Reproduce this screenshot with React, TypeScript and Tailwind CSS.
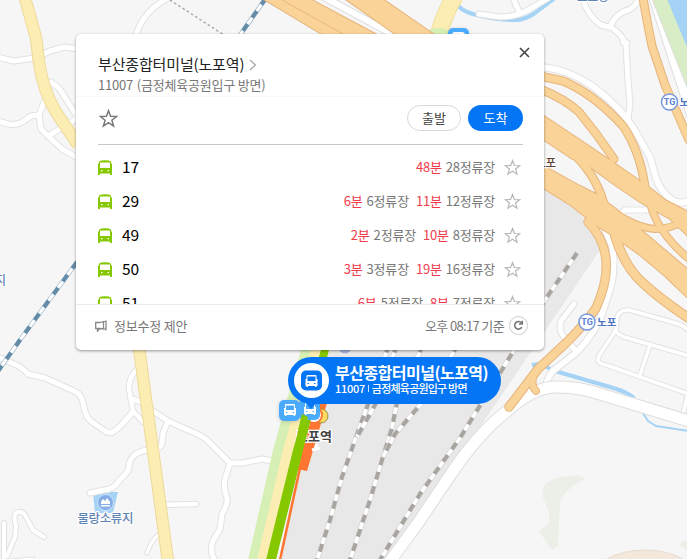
import React, { useState } from "react"

const FONT = "font-['Noto_Sans_CJK_KR','Noto_Sans',sans-serif]"

type Arrival = { min: number; stops: number }

const ROUTES: { name: string; arrivals: Arrival[] }[] = [
  { name: "17", arrivals: [{ min: 48, stops: 28 }] },
  { name: "29", arrivals: [{ min: 6, stops: 6 }, { min: 11, stops: 12 }] },
  { name: "49", arrivals: [{ min: 2, stops: 2 }, { min: 10, stops: 8 }] },
  { name: "50", arrivals: [{ min: 3, stops: 3 }, { min: 19, stops: 16 }] },
  { name: "51", arrivals: [{ min: 6, stops: 5 }, { min: 8, stops: 7 }] },
]

// === MAP DATA ===
const LOCAL_ROADS: { d: string; w: number }[] = [
  { d: "M-2 57L5 59L14 61L35 58L50 51L65 47L78 49", w: 5 },
  { d: "M-2 121L8 124Q17 126 24 121L31 116L39 115L45 100", w: 5 },
  { d: "M39 115L41 129L48 136L62 149L78 158", w: 5 },
  { d: "M48 136L78 118M51 82L59 88L78 118", w: 5 },
  { d: "M136 36Q142 12 168 -2", w: 5 },
  { d: "M-2 357L14 364Q22 367 28 374L45 378L65 387L76 392Q82 395 84 407Q86 418 92 422L105 431Q111 435 117 429Q127 420 133 411", w: 5 },
  { d: "M136 370Q128 380 129 389L133 411L143 422", w: 4.5 },
  { d: "M131 399L139 401L150 409L168 421L190 431Q204 436 211 444L230 463L243 463L262 459L272 461", w: 5 },
  { d: "M168 421L163 433L162 444Q160 450 147 450Q134 452 130 461L128 471L119 481Q113 490 104 490L90 493", w: 5 },
  { d: "M160 505L196 504", w: 4.5 },
  { d: "M158 535Q151 541 147 553", w: 3 },
  { d: "M230 463L225 479Q223 487 227 498Q228 504 222 514L220 529L213 541Q209 551 215 561", w: 5 },
  { d: "M4 523L4 561M7 556L15 537L16 526Q12 512 19 512Q24 511 27 519L33 530L44 537", w: 4 },
  { d: "M12 561L33 559", w: 3 },
  { d: "M479 14L500 17Q517 17 530 9L548 -2M513 -2L520 14", w: 5 },
  { d: "M582 -2Q588 16 601 25L612 28Q624 36 626 46L628 80L630 104L628 118", w: 5 },
  { d: "M610 27Q614 16 625 11Q635 9 639 -2M623 42L627 43", w: 5 },
  { d: "M540 67Q569 69 595 88Q620 107 634 129L650 157L656 178Q660 191 671 199Q678 205 689 201", w: 6 },
  { d: "M617 216L625 210L660 210", w: 5 },
  { d: "M606 232L612 245Q615 263 612 282L604 308Q598 330 577 352L558 367Q548 373 546 386", w: 6 },
  { d: "M574 304L561 321Q558 330 564 337L577 352", w: 5 },
  { d: "M689 331Q684 325 672 322L629 310Q620 309 617 317L616 330L600 354Q594 363 606 365L689 394", w: 3.5 },
  { d: "M615 330Q618 336 631 339L689 356M650 345L640 375M688 394L682 418", w: 3.5 },
]

const MAIN_ROAD = "M388 564L416 526L447 480Q478 433 506 412Q532 388 554 387Q577 386 600 394L689 421"

const RAILS = [
  "M389 345L367 407L355 440L342 477L330 520L317 560",
  "M397 345L375 405L357 437",
  "M423 345L397 402L392 428L382 460L370 500L350 560",
  "M458 345L420 405L395 434L383 457",
  "M577 253L545 300L516 347L460 438L420 494L380 560",
]

const BLUE_RAIL = "M266 -2L240 35M77 262L20 340L-2 371"
const YELLOW_ROAD = "M25 -2L36 38L39 62Q43 91 56 112L78 145M139 348L147 407L157 480L168 562"

const RAMPS: { d: string; w: number }[] = [
  { d: "M540 76L563 81Q594 94 623 126Q640 151 645 187", w: 7 },
  { d: "M540 89Q565 99 579 112L597 135L614 159", w: 7 },
  { d: "M575 155Q598 178 605 208", w: 7 },
  { d: "M588 222Q604 238 606 260Q608 282 596 308Q585 324 568 341L538 369L509 407", w: 7.5 },
  { d: "M534 374Q530 385 536 391", w: 6 },
  { d: "M615 236Q625 268 644 284Q660 299 690 319", w: 8 },
  { d: "M643 -2Q647 22 652 46L665 85L689 140", w: 7 },
  { d: "M625 219Q641 228 655 229Q672 229 689 218", w: 6 },
  { d: "M650 203Q657 232 689 259", w: 6 },
]

const BANDS = [
  "M262 -2L325 36H379L308 -2Z",
  "M344 -2L398 36H436L381 -2Z",
  "M535 110L580 140L617 165L650 188L665 200L692 214V240L670 219L640 202L615 185L586 164L571 158L535 134Z",
  "M535 161L580 186L596 194L608 203L625 216L640 229L660 246L692 273V302L665 276L640 255L620 241L610 234L594 224L572 206L535 183Z",
]

const StarIcon = ({ size, color, w }: { size: number; color: string; w: number }) => (
  <svg width={size} height={size} viewBox="0 0 18 18" fill="none" stroke={color} strokeWidth={w}>
    <path d="M9 1.600L11 6.900L16.700 7.100L12.200 10.600L13.800 16.100L9 12.900L4.200 16.100L5.800 10.600L1.300 7.100L7 6.900Z" />
  </svg>
)

const BusIcon = () => (
  <svg width="14" height="15" viewBox="0 0 14 15">
    <path fill="#86c800" fillRule="evenodd" d="M1 2Q1.500 1 3.500 .6Q7 0 10.500 .6Q12.500 1 13 2V3.500H14V15H12V13.500H2V15H0V3.500H1ZM2 2.500V8H12V2.500ZM3 10V11.200H4.500V10ZM9.500 10V11.200H11V10Z" />
  </svg>
)

// white front view of a bus, drawn around 0,0
const BusGlyph = ({ x, y }: { x: number; y: number }) => (
  <g transform={`translate(${x} ${y})`}>
    <path fill="#fff" fillRule="evenodd" d="M-5 -5Q-5 -6 -4 -6H4Q5 -6 5 -5V-2H6V5H5V6H3.500V5H-3.500V6H-5V5H-6V-2H-5ZM-4 -4.500V0H4V-4.500ZM-4 2V3H-2.500V2ZM2.500 2V3H4V2Z" />
  </g>
)

const TollGate = ({ x, y }: { x: number; y: number }) => (
  <g transform={`translate(${x} ${y})`}>
    <circle r="8" fill="#fff" stroke="#7997e0" strokeWidth="1.5" />
    <text x="0" y="3.2" textAnchor="middle" fontSize="9" fontWeight="700" fill="#5c7fd8" className="font-['Roboto',sans-serif]">TG</text>
    <text x="10" y="4" fontSize="10.5" fontWeight="700" fill="#4f74c0" stroke="#fff" strokeWidth="2" paintOrder="stroke">노포</text>
  </g>
)

const MapCanvas = () => (
  <svg width="687" height="559" viewBox="0 0 687 559" className={`absolute inset-0 ${FONT}`} fill="none" strokeLinejoin="round">
    <rect width="687" height="559" fill="#f6f6f6" />

    {/* green areas and water */}
    <path fill="#ecefe8" d="M585 479L578 475L560 477Q549 480 545 485Q542 490 543 497L549 513V523L539 531L552 550L558 546L560 503Q565 488 585 479ZM687 541Q680 541 680 546L687 550Z" />
    <ellipse cx="645" cy="576" rx="50" ry="26" fill="#f4e8dd" stroke="#e8dcd0" />
    <path fill="#a5d3f5" d="M666 -1H688V50ZM93 492H118L113 513H95Z" />
    <path fill="#d8edc5" d="M651 -1H667L688 50V91Z" />
    <path fill="#fff" stroke="#ddd" d="M649 -1H652L688 90V120Z" />
    <path stroke="#a5d3f5" strokeWidth="4" d="M458 6Q465 13 481 16Q500 20 515 20Q525 20 535 13L555 -2M532 365L540 364L555 371L610 387Q628 392 634 398" />
    <path stroke="#a5d3f5" strokeWidth="2" d="M643 413L648 421L656 426L689 431" />

    {/* rail yard */}
    <path fill="#e8e8e8" d="M322 340L535 180L544 188L572 205L590 226L600 250L480 427L385 562L279 562Z" />

    {/* local roads */}
    <g strokeLinecap="round">
      {LOCAL_ROADS.map((r) => <path key={r.d} d={r.d} stroke="#e2e2e2" strokeWidth={r.w + 2} />)}
      {LOCAL_ROADS.map((r) => <path key={r.d} d={r.d} stroke="#fff" strokeWidth={r.w} />)}
      <path d={MAIN_ROAD} stroke="#dedede" strokeWidth="13" />
      <path d={MAIN_ROAD} stroke="#fff" strokeWidth="11" />
    </g>
    <path d="M322 -4L396 36" stroke="#ddd" strokeWidth="8" />
    <path d="M322 -4L396 36" stroke="#fff" strokeWidth="6" />
    <path d="M170 0L224 35" stroke="#aaa" strokeWidth="1.5" strokeDasharray="2.5 2.5" />

    {/* railways */}
    {RAILS.map((d) => (
      <g key={d}>
        <path d={d} stroke="#d6d6d6" strokeWidth="5" />
        <path d={d} stroke="#fff" strokeWidth="3.6" />
        <path d={d} stroke="#a8a49f" strokeWidth="4" strokeDasharray="8 7" />
      </g>
    ))}
    <path d={BLUE_RAIL} stroke="#9eb9cc" strokeWidth="4.6" />
    <path d={BLUE_RAIL} stroke="#fff" strokeWidth="3" />
    <path d={BLUE_RAIL} stroke="#648ca9" strokeWidth="4" strokeDasharray="8 8" />

    {/* yellow roads */}
    <path d={YELLOW_ROAD} stroke="#eed99a" strokeWidth="12.5" />
    <path d={YELLOW_ROAD} stroke="#fcedb3" strokeWidth="10.5" />
    <path d="M455 -4Q445 12 438 36" stroke="#eed99a" strokeWidth="17.5" />
    <path d="M455 -4Q445 12 438 36" stroke="#fcedb3" strokeWidth="16" />
    <path d="M425 36Q428 28 438 28Q449 28 452 36Z" fill="#d6efb5" />

    {/* expressways */}
    {RAMPS.map((r) => <path key={r.d} d={r.d} stroke="#e6b57c" strokeWidth={r.w + 2} strokeLinecap="round" />)}
    {BANDS.map((d) => <path key={d} d={d} stroke="#e6b57c" strokeWidth="2" />)}
    {BANDS.map((d) => <path key={d} d={d} fill="#f9d398" />)}
    {RAMPS.map((r) => <path key={r.d} d={r.d} stroke="#f9d398" strokeWidth={r.w} strokeLinecap="round" />)}
    <path d="M282 0L345 35" stroke="#eab77d" />

    {/* bus lane corridor */}
    <path fill="#d6efb5" d="M302 346H313L286 450L257 560H248L273 450Z" />
    <path fill="#fcedb3" d="M312 346H323L294 450L267 560H257L283 450Z" />
    <path stroke="#ff7531" strokeWidth="2.5" d="M300 468L280 560" />
    <path fill="#ff7531" d="M316 403H327L307 471L297 469Z" />
    <circle cx="321" cy="416" r="7" fill="#fbdc63" stroke="#a58c3c" />
    <circle cx="314" cy="415" r="8" fill="#fff" stroke="#ff7531" strokeWidth="2" />
    <path stroke="#fff" strokeWidth="3" d="M312 450L320 448M317 444L315 450" />
    <circle cx="345" cy="347" r="6.5" fill="#a5b1dd" />

    {/* place labels */}
    <g stroke="#fff" strokeWidth="2.5" paintOrder="stroke">
      <text x="296" y="441" fontSize="13" fontWeight="700" fill="#444" textLength="36">노포역</text>
      <text x="535" y="167" fontSize="11.5" fontWeight="500" fill="#5f4332">노포</text>
      <text x="77.500" y="523" fontSize="12.5" fontWeight="500" fill="#5f83b4" textLength="56">물랑소류지</text>
      <text x="-5" y="285" fontSize="12" fontWeight="500" fill="#5f83b4">지</text>
      <text x="577" y="1" fontSize="11.5" fontWeight="500" fill="#5f83b4">노포동</text>
    </g>
    <circle cx="105.500" cy="502.500" r="8" fill="#86aee8" stroke="#d3e3fa" />
    <path fill="#fff" d="M101 502L103 499L105 501L107 498L110 502V504H101ZM101 505H110V506.500H101Z" />
    <TollGate x={587} y={322} />
    <TollGate x={669.500} y={102} />

    {/* bus stop badges */}
    <g className="drop-shadow-sm">
      <rect x="448" y="28" width="21" height="21" rx="5" fill="#4aabff" />
      <rect x="453" y="33" width="11" height="8" rx="2" stroke="#fff" strokeWidth="2" />
      <rect x="279" y="400" width="21" height="21" rx="5" fill="#4aabfc" />
    </g>
    <path fill="#86c800" d="M322 346H330L303 450L276 560H266L293 450L307 400Z" />
    <rect x="299" y="399" width="21" height="21" rx="5" fill="#4aabfc" />
    <path fill="#86c800" d="M302 414L308 417L305 430H298Z" />
    <BusGlyph x={290} y={410} />
    <BusGlyph x={310} y={409} />
    <path fill="#0475f4" d="M305 402H317L311 409Z" />
  </svg>
)

const StationMarker = () => (
  <div className={`absolute left-[288px] top-[357px] flex h-[47px] w-[213px] items-center rounded-full bg-[#0475f4] pl-[6px] text-white ${FONT}`}>
    <div className="flex h-[35px] w-[35px] shrink-0 items-center justify-center rounded-full bg-white">
      <svg width="21" height="21" viewBox="-10.500 -10.500 21 21">
        <rect x="-10.500" y="-10" width="21" height="20" rx="5" fill="#0475f4" />
        <BusGlyph x={0} y={0.500} />
      </svg>
    </div>
    <div className="ml-[6px] pb-[2px] whitespace-nowrap">
      <div className="text-[16px] leading-[18px] font-bold tracking-[-0.52px]">부산종합터미널(노포역)</div>
      <div className="flex items-center text-[11px] leading-[15px] font-medium tracking-[-0.8px]">
        <span className="tracking-[-0.3px]">11007</span>
        <span className="mx-[3px] h-[7px] w-px bg-white/80" />금정체육공원입구 방면
      </div>
    </div>
  </div>
)

const App = () => {
  const [open, setOpen] = useState(true)

  return (
    <div className="relative h-[559px] w-[687px] overflow-hidden bg-[#f6f6f6]">
      <MapCanvas />
      <StationMarker />

      {/* === Station Panel === */}
      {open && (
        <div className={`absolute left-[76px] top-[34px] flex h-[316px] w-[468px] flex-col overflow-hidden rounded-[5px] bg-white shadow-[0_1px_3px_rgba(0,0,0,0.4)] ${FONT}`}>
          <header className="flex h-[63px] shrink-0 justify-between border-b border-[#f8f8f8] pl-[22px] pr-[14px]">
            <div className="pt-[20px] whitespace-nowrap">
              <h1 className="flex h-[21px] items-center text-[15px] font-normal tracking-[-0.15px] text-[#222]">
                부산종합터미널(노포역)
                <svg width="8" height="12" viewBox="0 0 8 12" fill="none" stroke="#aaa" strokeWidth="1.3" className="ml-[5px]">
                  <path d="M1 1L6.500 6L1 11" />
                </svg>
              </h1>
              <p className="text-[13px] leading-[20px] tracking-[-0.2px] text-[#777]">
                11007 <span className="ml-px">(금정체육공원입구 방면)</span>
              </p>
            </div>
            <button onClick={() => setOpen(false)} className="mt-[13px] h-[11px]">
              <svg width="11" height="11" viewBox="0 0 11 11" stroke="#444" strokeWidth="1.6">
                <path d="M1 1L10 10M10 1L1 10" />
              </svg>
            </button>
          </header>

          <div className="mx-[22px] mr-[21px] flex h-[48px] shrink-0 items-center justify-between border-b border-[#c8c8c8] pb-[5px] pl-px">
            <StarIcon size={19} color="#777" w={1.4} />
            <div className="flex gap-[7px] text-[13px]">
              <button className="h-[26px] w-[54px] rounded-full border border-[#d8d8d8] text-[#444]">출발</button>
              <button className="h-[26px] w-[55px] rounded-full bg-[#0475f4] text-white">도착</button>
            </div>
          </div>

          {/* route list, cut off by the footer */}
          <ul className="min-h-0 flex-1 overflow-hidden pl-[22px] pr-[23px] pt-[5px]">
            {ROUTES.map((route) => (
              <li key={route.name} className="flex h-[34px] items-center">
                <span className="pt-px"><BusIcon /></span>
                <span className="ml-[10px] text-[15.5px] text-black">{route.name}</span>
                <div className="ml-auto flex gap-[7px] text-[13px] tracking-[-0.2px] whitespace-nowrap">
                  {route.arrivals.map((a) => (
                    <span key={a.min} className="flex gap-[4px] text-[#777]">
                      <span className="text-[#f13b4b]">{a.min}분</span>
                      <span>{a.stops}정류장</span>
                    </span>
                  ))}
                </div>
                <span className="ml-[9px] pt-px"><StarIcon size={17} color="#b5b5b5" w={1.2} /></span>
              </li>
            ))}
          </ul>

          <footer className="flex h-[46px] shrink-0 items-center border-t border-[#ebebeb] pl-[19px] pr-[16px] pb-[4px] text-[13px] text-[#777]">
            <svg width="12" height="12" viewBox="0 0 12 12" fill="none" stroke="#888" strokeWidth="1.3">
              <path d="M.7 2.500H5L8.500 1.500V9L5 8.500H.7ZM11 .5V10.500M8.500 2L11 1M8.500 8.500L11 9.500M2.500 8.500V11L5 8.500" />
            </svg>
            <span className="ml-[7px] tracking-[-0.2px]">정보수정 제안</span>
            <span className="ml-auto tracking-[-0.65px]">오후 08:17 기준</span>
            <button className="ml-[5px] flex h-[19px] w-[19px] items-center justify-center rounded-full border border-[#ccc]">
              <svg width="11" height="11" viewBox="0 0 11 11" fill="none" stroke="#777" strokeWidth="1.6">
                <path d="M8.800 7.200A3.800 3.800 0 1 1 8.500 3M9.300 .8V4H6" />
              </svg>
            </button>
          </footer>
        </div>
      )}
    </div>
  )
}

export default App
